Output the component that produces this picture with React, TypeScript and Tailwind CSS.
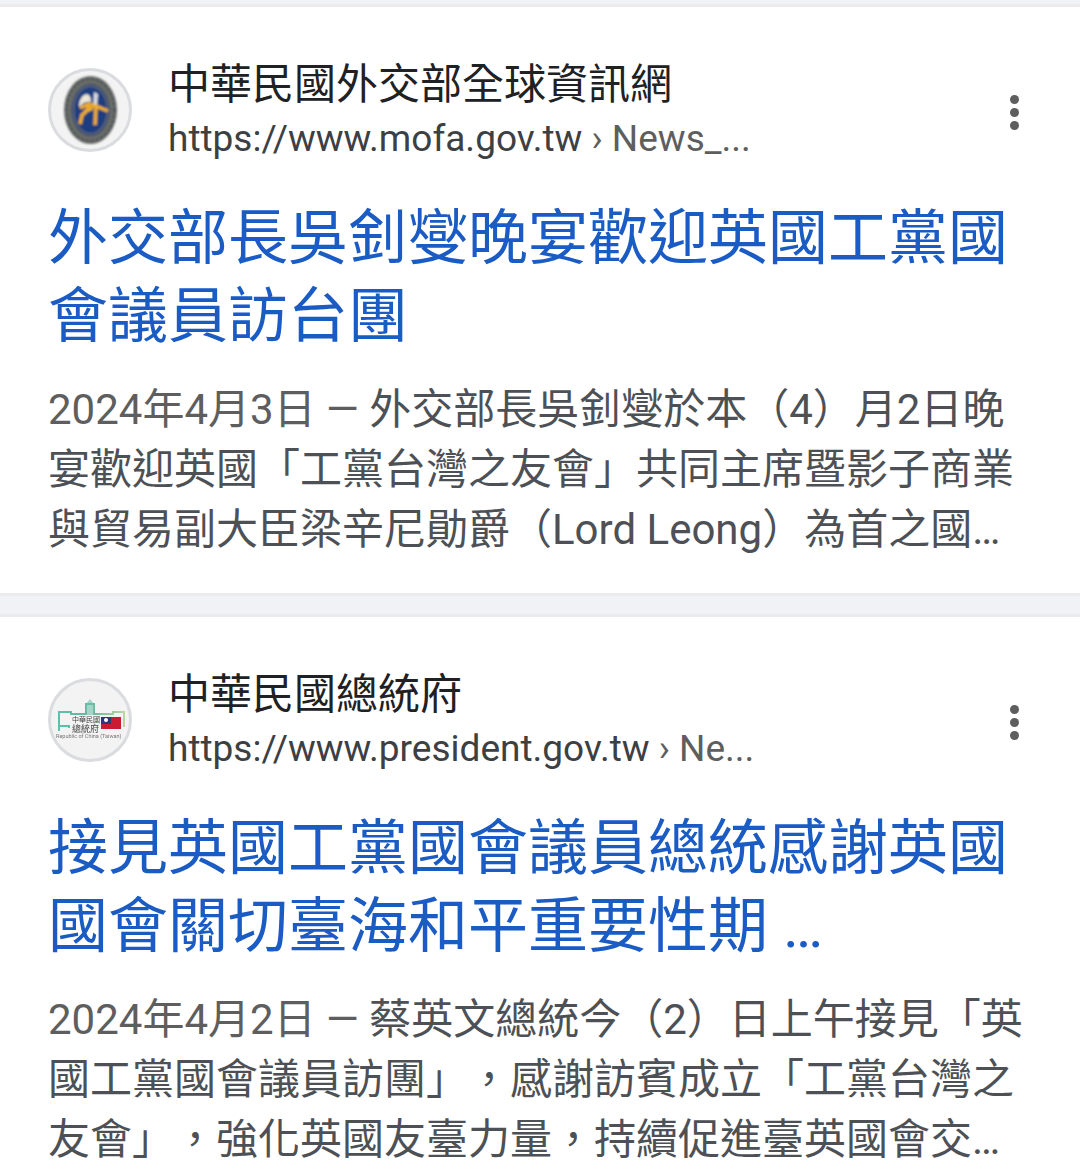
import type { ReactNode } from "react";

type Result = {
  site: string;
  host: string;
  path: string;
  href: string;
  title: string;
  date: string;
  snippet: string;
  icon: ReactNode;
};

function MofaIcon() {
  return (
    <svg viewBox="0 0 78 78" className="h-full w-full" aria-hidden="true">
      <defs>
        <filter id="mofa-soft">
          <feGaussianBlur stdDeviation="1" />
        </filter>
      </defs>
      <g filter="url(#mofa-soft)">
        <ellipse cx="39.5" cy="39" rx="26.5" ry="34" fill="#6b6d63" />
        <ellipse cx="39.5" cy="39" rx="24" ry="31" fill="none" stroke="#3e4c66" strokeWidth="2" strokeDasharray="3 2" />
        <ellipse cx="39.5" cy="39" rx="19" ry="26" fill="#1d3c80" />
        <ellipse cx="39.5" cy="39" rx="17" ry="24" fill="none" stroke="#5a6474" strokeWidth="2" />
        <path d="M28 34 Q29 24 36 23 Q40 24 40 31 Q34 30 28 36 Z" fill="#ece6d6" />
        <path d="M43 21 L47 23 L46 37 L42 35 Z" fill="#d9dbe0" />
        <path
          d="M29 37 L38 33 L47 36 L57 40 M38 34 Q37 40 31 44 L29 53 M33 41 L42 37 M45 36 L44 54"
          fill="none"
          stroke="#efad25"
          strokeWidth="3.5"
        />
      </g>
    </svg>
  );
}

function PresidentIcon() {
  return (
    <svg viewBox="0 0 78 78" className="h-full w-full" aria-hidden="true">
      <defs>
        <linearGradient id="roof" gradientUnits="userSpaceOnUse" x1="6" y1="0" x2="74" y2="0">
          <stop offset="0" stopColor="#5cc0ad" />
          <stop offset="0.5" stopColor="#64b99f" />
          <stop offset="1" stopColor="#bfd6a0" />
        </linearGradient>
        <filter id="president-soft">
          <feGaussianBlur stdDeviation="0.7" />
        </filter>
      </defs>
      <g filter="url(#president-soft)">
        <path
          d="M18 47 V45 H8 V31 H20 V33 H35 V23 H43 V33 H62 V31 H73 V46 M8 45 V50"
          fill="none"
          stroke="url(#roof)"
          strokeWidth="2"
        />
        <path d="M35 34 V23 L39 18 L43 23 V34 Z" fill="#6fc0aa" opacity="0.6" />
        <g fill="#444444" fontFamily="'Noto Sans CJK TC', sans-serif">
          <text x="21" y="41" fontSize="7">中華民國</text>
          <text x="21" y="51" fontSize="9">總統府</text>
        </g>
        <text x="5" y="57" fill="#777777" fontFamily="Roboto, sans-serif" fontSize="5.5">
          Republic of China (Taiwan)
        </text>
        <rect x="50" y="36" width="20" height="12" fill="#c91f32" />
        <rect x="50" y="36" width="10" height="7" fill="#273a7e" />
        <circle cx="55" cy="39" r="2" fill="#ffffff" />
      </g>
    </svg>
  );
}

const results: Result[] = [
  {
    site: "中華民國外交部全球資訊網",
    host: "https://www.mofa.gov.tw",
    path: " › News_...",
    href: "https://www.mofa.gov.tw",
    title: "外交部長吳釗燮晚宴歡迎英國工黨國會議員訪台團",
    date: "2024年4月3日",
    snippet:
      "外交部長吳釗燮於本（4）月2日晚宴歡迎英國「工黨台灣之友會」共同主席暨影子商業與貿易副大臣梁辛尼勛爵（Lord Leong）為首之國…",
    icon: <MofaIcon />,
  },
  {
    site: "中華民國總統府",
    host: "https://www.president.gov.tw",
    path: " › Ne...",
    href: "https://www.president.gov.tw",
    title: "接見英國工黨國會議員總統感謝英國國會關切臺海和平重要性期 …",
    date: "2024年4月2日",
    snippet:
      "蔡英文總統今（2）日上午接見「英國工黨國會議員訪團」，感謝訪賓成立「工黨台灣之友會」，強化英國友臺力量，持續促進臺英國會交…",
    icon: <PresidentIcon />,
  },
];

function ResultCard({ result }: { result: Result }) {
  return (
    <article className="border-y-3 border-[#ebebed] bg-white px-12 pt-[51px] pb-[33px]">
      <div className="flex items-center">
        <a href={result.href} className="flex min-w-0 flex-1 items-center gap-9">
          <span className="mb-1 size-21 shrink-0 overflow-hidden rounded-full border-3 border-[#dadce0] bg-[#f3f3f3]">
            {result.icon}
          </span>
          <span className="min-w-0">
            <span className="block truncate text-[42px] leading-[54px] text-[#202124]">{result.site}</span>
            <span className="block truncate text-[37px] leading-[54px] text-[#3c4043]">
              {result.host}
              <span className="text-[#5e5e5e]">{result.path}</span>
            </span>
          </span>
        </a>
        <button type="button" aria-label="更多選項" className="flex w-9 shrink-0 flex-col items-center gap-1 py-4">
          <span className="size-[9px] rounded-full bg-[#5e5e5e]" />
          <span className="size-[9px] rounded-full bg-[#5e5e5e]" />
          <span className="size-[9px] rounded-full bg-[#5e5e5e]" />
        </button>
      </div>
      <h3 className="mt-[34px] text-[60px] leading-[78px] text-[#1a5bc4]">
        <a href={result.href}>{result.title}</a>
      </h3>
      <p className="mt-6 text-[42px] leading-[60px] text-[#4d5156]">
        <span className="text-[#5e5e5e]">{`${result.date} — `}</span>
        {result.snippet}
      </p>
    </article>
  );
}

export default function App() {
  return (
    <main
      lang="zh-TW"
      className="flex flex-col gap-[18px] bg-[#f1f2f5] pt-1 font-[Roboto,'Noto_Sans_CJK_TC',sans-serif] [text-spacing-trim:space-all]"
    >
      {results.map((result) => (
        <ResultCard key={result.site} result={result} />
      ))}
    </main>
  );
}
